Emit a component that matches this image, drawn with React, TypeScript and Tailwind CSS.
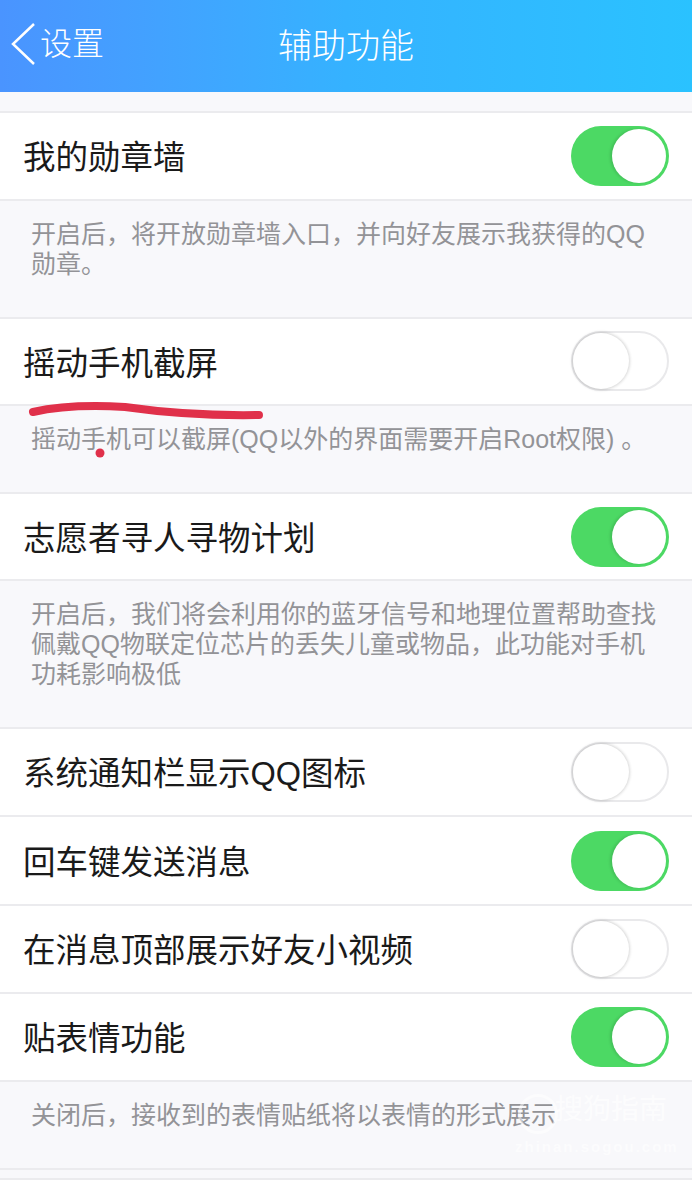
const stack = { fontFamily: '"Liberation Sans", "Noto Sans CJK SC", sans-serif' }

function Toggle({ on }: { on: boolean }) {
  if (on) {
    return (
      <div className="flex h-[60px] w-[98px] justify-end rounded-full bg-[#4cd964]">
        <div className="mt-[3px] mr-[3px] h-[54px] w-[54px] rounded-full bg-white shadow-[-2px_0_3px_rgba(0,0,0,0.12)]" />
      </div>
    )
  }
  return (
    <div className="-mt-[1px] h-[60px] w-[98px] rounded-full border-2 border-[#e9e9eb] bg-white">
      <div className="h-[56px] w-[56px] rounded-full bg-white shadow-[0_0_3px_1px_rgba(0,0,0,0.16)]" />
    </div>
  )
}

function Row({ label, on, h }: { label: string; on: boolean; h: string }) {
  return (
    <div className={`flex ${h} items-center justify-between border-b-2 border-[#ebebee] bg-white pl-[23px] pr-[23px]`}>
      <span className="mt-[5px] text-[32.5px] leading-none text-[#1a1a1a]">{label}</span>
      <Toggle on={on} />
    </div>
  )
}

function Note({ h, children }: { h: string; children: React.ReactNode }) {
  return (
    <div className={`${h} border-b-2 border-[#ebebee] bg-[#f8f8fb] pl-[31px] pr-[30px] pt-[18px] text-[25px] leading-[30px] text-[#939397]`}>
      {children}
    </div>
  )
}

export default function App() {
  return (
    <div className="relative h-[1180px] w-[692px] overflow-hidden bg-[#f8f8fb]" style={stack}>
      <header className="flex h-[92px] items-center bg-gradient-to-r from-[#4a94ff] via-[#35b2ff] to-[#2ac2ff] text-white">
        <div className="-mt-[4px] flex w-[278px] items-center pl-[9px]">
          <svg width="28" height="44" viewBox="0 0 28 44" fill="none" stroke="white" strokeWidth="2.5">
            <path d="M25 2 L4 22 L25 42" />
          </svg>
          <span className="ml-[3px] text-[32px] font-light leading-none">设置</span>
        </div>
        <span className="-mt-[1px] text-[34px] font-light leading-none">辅助功能</span>
      </header>

      <div className="h-[21px] border-b-2 border-[#ebebee]" />
      <Row label="我的勋章墙" on h="h-[88px]" />
      <Note h="h-[118px]">开启后，将开放勋章墙入口，并向好友展示我获得的QQ勋章。</Note>
      <Row label="摇动手机截屏" on={false} h="h-[87px]" />
      <Note h="h-[88px]">摇动手机可以截屏(QQ以外的界面需要开启Root权限) 。</Note>
      <Row label="志愿者寻人寻物计划" on h="h-[87px]" />
      <Note h="h-[148px]">开启后，我们将会利用你的蓝牙信号和地理位置帮助查找佩戴QQ物联定位芯片的丢失儿童或物品，此功能对手机功耗影响极低</Note>
      <Row label="系统通知栏显示QQ图标" on={false} h="h-[88px]" />
      <Row label="回车键发送消息" on h="h-[89px]" />
      <Row label="在消息顶部展示好友小视频" on={false} h="h-[88px]" />
      <Row label="贴表情功能" on h="h-[88px]" />
      <Note h="h-[88px]">关闭后，接收到的表情贴纸将以表情的形式展示</Note>
      <div className="h-[8px]" />
      <div className="h-[4px] border-t-2 border-[#ebebee] bg-white" />

      {/* red pen marks on top of the screenshot */}
      <svg className="absolute left-0 top-[400px]" width="270" height="60" viewBox="0 0 270 60" fill="none">
        <path d="M33 12 C60 6 90 5 125 7 C160 12 200 16 259 15" stroke="#e0304a" strokeWidth="8" strokeLinecap="round" />
        <circle cx="100" cy="53" r="4.5" fill="#e0304a" />
      </svg>

      {/* watermark */}
      <div className="absolute left-[518px] top-[1094px] h-[40px] w-[40px] rounded-full border-[3px] border-white/50" />
      <div className="absolute left-[555px] top-[1096px] text-[28px] leading-none text-white/70">搜狗指南</div>
      <div className="absolute left-[515px] top-[1139px] text-[15px] font-bold leading-none tracking-[2px] text-white/60">
        zhinan.sogou.com
      </div>
    </div>
  )
}
